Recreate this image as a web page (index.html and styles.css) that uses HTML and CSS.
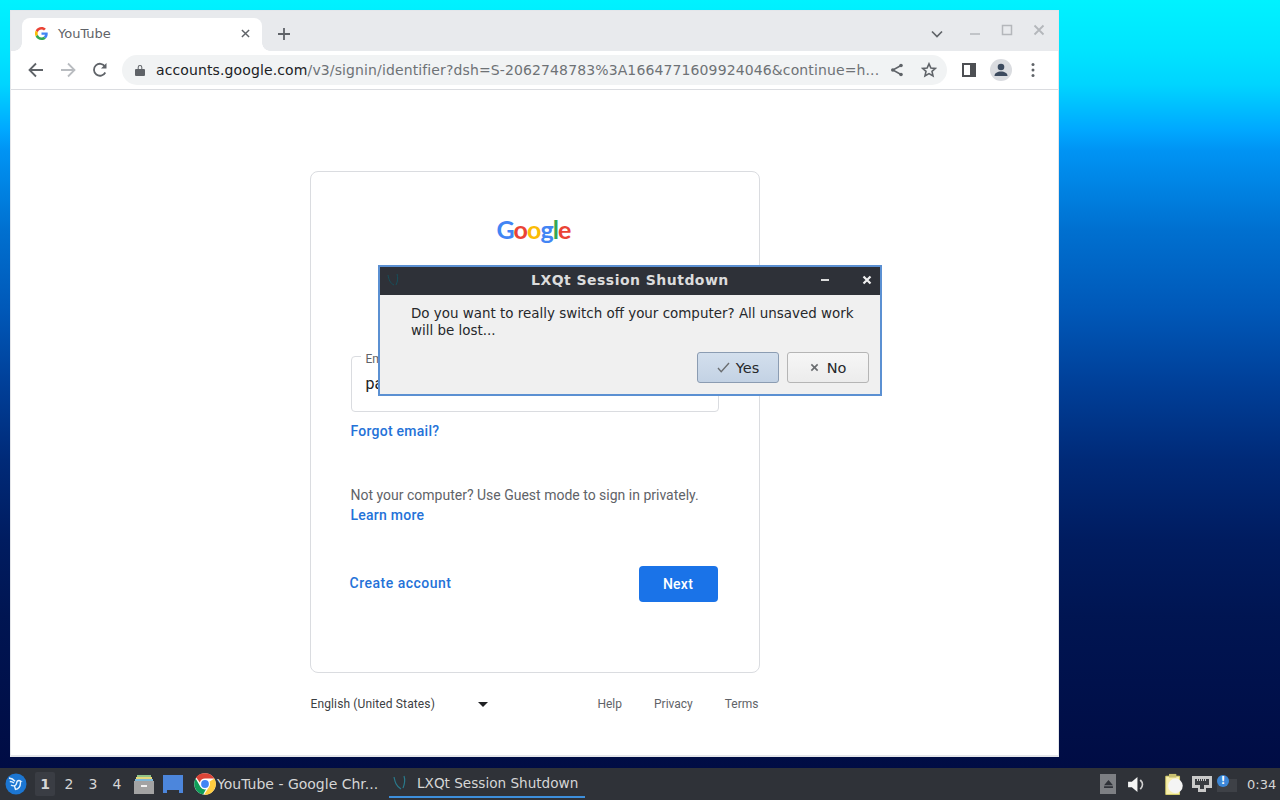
FILE: index.html
```html
<!DOCTYPE html>
<html lang="en">
<head>
<meta charset="utf-8">
<title>LXQt desktop</title>
<link rel="stylesheet" href="styles.css">
</head>
<body>
<div class="desktop">
  <section class="browser">
    <header class="tabstrip">
      <div class="tab">
        <svg class="tab-favicon" viewBox="0 0 48 48"><path fill="#EA4335" d="M24 9.5c3.5 0 6.700 1.200 9.200 3.600l6.900-6.900C35.900 2.400 30.500 0 24 0 14.600 0 6.500 5.400 2.600 13.200l8 6.200C12.400 13.700 17.700 9.500 24 9.500z"/><path fill="#4285F4" d="M47 24.500c0-1.600-.1-3.100-.4-4.500H24v9h12.900c-.6 3-2.200 5.400-4.700 7.100l7.700 6C44.400 37.900 47 31.800 47 24.500z"/><path fill="#FBBC05" d="M10.500 28.600A14.500 14.500 0 0 1 10.500 19.400l-8-6.200A24 24 0 0 0 2.600 34.800z"/><path fill="#34A853" d="M24 48c6.500 0 11.900-2.100 15.900-5.900l-7.700-6c-2.200 1.400-4.900 2.300-8.200 2.300-6.300 0-11.600-4.200-13.500-9.900l-8 6.200C6.500 42.600 14.600 48 24 48z"/></svg>
        <span class="tab-title">YouTube</span>
        <svg class="tab-close" viewBox="0 0 10 10"><path d="M1 1l8 8M9 1l-8 8"/></svg>
      </div>
      <svg class="new-tab" viewBox="0 0 12 12"><path d="M6 0v12M0 6h12"/></svg>
      <svg class="tab-search" viewBox="0 0 12 8"><path d="M1 1.500l5 5 5-5"/></svg>
      <svg class="win-min" viewBox="0 0 12 12"><path d="M1 9h10"/></svg>
      <svg class="win-max" viewBox="0 0 12 12"><path d="M1.500 1.500h9v9h-9z"/></svg>
      <svg class="win-close" viewBox="0 0 12 12"><path d="M1.500 1.500l9 9M10.500 1.500l-9 9"/></svg>
    </header>
    <nav class="toolbar">
      <span class="tool"><svg class="ico-stroke" viewBox="0 0 16 16"><path d="M15 8H2M8 1.500L1.500 8 8 14.500"/></svg></span>
      <span class="tool"><svg class="ico-stroke faded" viewBox="0 0 16 16"><path d="M1 8h13M8 1.500L14.500 8 8 14.500"/></svg></span>
      <span class="tool"><svg class="ico-stroke" viewBox="0 0 16 16"><path d="M13.300 10.500A6 6 0 1 1 13 4.500"/><path class="ico-fill" d="M14.500 1v5.500H9z"/></svg></span>
      <div class="omnibox">
        <svg class="lock" viewBox="0 0 10 12"><path d="M1 5h8a1 1 0 0 1 1 1v5a1 1 0 0 1-1 1H1a1 1 0 0 1-1-1V6a1 1 0 0 1 1-1zM2.700 5V3.200a2.300 2.300 0 0 1 4.600 0V5H6.300V3.200a1.300 1.300 0 0 0-2.600 0V5z"/></svg>
        <span class="url"><span class="url-host">accounts.google.com</span>/v3/signin/identifier?dsh=S-2062748783%3A1664771609924046&amp;continue=h...</span>
        <svg class="share" viewBox="0 0 14 14"><circle cx="11" cy="2.500" r="1.800"/><circle cx="2.800" cy="7" r="1.800"/><circle cx="11" cy="11.500" r="1.800"/><path d="M11 2.500L2.800 7l8.200 4.500"/></svg>
        <svg class="star" viewBox="0 0 16 16"><path d="M8 1.800l1.900 4.200 4.500.4-3.400 3 1 4.500L8 11.600l-4 2.300 1-4.500-3.400-3 4.500-.4z"/></svg>
      </div>
      <span class="tool panel-tool"><svg class="sidepanel" viewBox="0 0 14 14"><path fill-rule="evenodd" d="M0 0h14v14H0zM2 2v10h6V2z"/></svg></span>
      <span class="avatar"><svg viewBox="0 0 22 22"><circle cx="11" cy="8" r="3.300"/><path d="M4.500 17c0-3 3-4.500 6.500-4.500s6.500 1.500 6.500 4.500z"/></svg></span>
      <span class="tool"><svg class="kebab" viewBox="0 0 4 16"><circle cx="2" cy="2.500" r="1.500"/><circle cx="2" cy="8" r="1.500"/><circle cx="2" cy="13.500" r="1.500"/></svg></span>
    </nav>
    <main class="page">
      <div class="card">
        <div class="logo"><span class="g-blue">G</span><span class="g-red">o</span><span class="g-yellow">o</span><span class="g-blue">g</span><span class="g-green">l</span><span class="g-red">e</span></div>
        <div class="field">
          <span class="field-label">Email or phone</span>
          <span class="field-value">pa</span>
        </div>
        <a class="link forgot">Forgot email?</a>
        <p class="guest">Not your computer? Use Guest mode to sign in privately.<br><a class="link">Learn more</a></p>
        <div class="actions">
          <a class="create">Create account</a>
          <button class="next">Next</button>
        </div>
      </div>
      <footer class="foot">
        <span class="lang">English (United States)</span>
        <span class="lang-caret"></span>
        <span class="foot-links"><span>Help</span><span>Privacy</span><span>Terms</span></span>
      </footer>
    </main>
  </section>

  <section class="dialog">
    <header class="dlg-title">
      <svg class="dlg-icon" viewBox="0 0 16 16"><path d="M3 3c1 5 2 8 6 10M12 2c1 3 1 7-1 11"/></svg>
      <span class="dlg-caption">LXQt Session Shutdown</span>
      <svg class="dlg-min" viewBox="0 0 10 10"><path d="M1 5h8"/></svg>
      <svg class="dlg-close" viewBox="0 0 10 10"><path d="M1.500 1.500l7 7M8.500 1.500l-7 7"/></svg>
    </header>
    <div class="dlg-body">
      <p class="dlg-text">Do you want to really switch off your computer? All unsaved work will be lost...</p>
      <div class="dlg-buttons">
        <button class="dlg-btn dlg-yes"><svg viewBox="0 0 14 12"><path d="M1 6.500l3.500 4L13 1"/></svg>Yes</button>
        <button class="dlg-btn dlg-no"><svg viewBox="0 0 10 10"><path d="M1.500 1.500l7 7M8.500 1.500l-7 7"/></svg>No</button>
      </div>
    </div>
  </section>
</div>

<footer class="taskbar">
  <svg class="start" viewBox="0 0 22 22"><circle cx="11" cy="11" r="10.500" fill="#1c76d2"/><path fill="none" stroke="#e8f4ff" stroke-width="1.400" stroke-linejoin="round" d="M4 5c2.500.3 4.500 1.500 6 3.300M4.800 8.500c1.500 0 3 .5 4.200 1.500M6 12c1 .8 2.300 1 3.500.8M10 16.500c3.500-.5 5.500-3.500 5.500-7 .3-1.200-.5-2-1.500-2-1.300 0-2.200 1-2.300 2.300-.2 1.500-1 2.500-2.200 3.200l1 3.500"/><path fill="#e8f4ff" d="M15.300 7.500l2.500.8-2.200.8z"/></svg>
  <div class="desks">
    <span class="desk desk-on">1</span><span class="desk">2</span><span class="desk">3</span><span class="desk">4</span>
  </div>
  <svg class="launch-files" viewBox="0 0 20 20"><path fill="#8fc48a" d="M3 1h14v3H3z"/><path fill="#e6d97c" d="M2 3h16v3H2z"/><path fill="#7fb8d8" d="M1 5h18v3H1z"/><path fill="#a3a3a3" d="M0 7h20v13H0z"/><path fill="#f2f2f2" d="M7 11h6v2H7z"/></svg>
  <svg class="launch-desktop" viewBox="0 0 20 18"><path fill="#4c86dc" d="M0 0h20v18h-4v-3H4v3H0z"/></svg>
  <div class="task task-chrome">
    <svg class="chrome" viewBox="0 0 48 48"><circle cx="24" cy="24" r="23.500" fill="#fff"/><path fill="#db4437" d="M24 .5a23.500 23.500 0 0 1 20.400 11.750H24a11.750 11.750 0 0 0-11.300 8.600L4.600 9A23.500 23.500 0 0 1 24 .5z"/><path fill="#0f9d58" d="M3.600 12.250L13.800 30A11.750 11.750 0 0 0 26 35.500L20 47A23.500 23.500 0 0 1 3.600 12.250z"/><path fill="#ffcd40" d="M44.400 12.250A23.500 23.500 0 0 1 22 47.400L33 30a11.750 11.750 0 0 0 .5-11z"/><circle cx="24" cy="24" r="10.500" fill="#fff"/><circle cx="24" cy="24" r="8.500" fill="#4285f4"/></svg>
    <span class="task-label">YouTube - Google Chr...</span>
  </div>
  <div class="task task-active">
    <svg class="task-lxqt" viewBox="0 0 16 16"><path d="M2 2c1 5 2 9 7 12M12 1c1 3 1 7-1 12"/></svg>
    <span class="task-label">LXQt Session Shutdown</span>
  </div>
  <div class="tray">
    <span class="eject"><svg viewBox="0 0 10 9"><path d="M5 0l5 6H0zM0 7h10v2H0z"/></svg></span>
    <svg class="volume" viewBox="0 0 18 16"><path fill="#f4f4f4" d="M0 5h4l6-5v16l-6-5H0z"/><path fill="none" stroke="#cfcfcf" stroke-width="2" d="M13 3c3 3 3 7 0 10"/></svg>
    <svg class="clipboard" viewBox="0 0 20 24"><path fill="#f7efb0" stroke="#dcd46a" d="M.5 3.500h15v20H.5z"/><path fill="#c8c070" d="M4 1h8v4H4z"/><circle cx="11" cy="14" r="8" fill="#f4f4f4"/></svg>
    <svg class="network" viewBox="0 0 20 16"><path fill="#c9c9c9" d="M0 0h20v12h-6v4H6v-4H0z"/><path fill="#3a3d42" d="M3 3h14v6h-5v4H8V9H3z"/><path fill="#c9c9c9" d="M5 3h1v2H5zm2 0h1v2H7zm2 0h1v2H9zm2 0h1v2h-1zm2 0h1v2h-1z"/></svg>
    <span class="notify"><span class="notify-dot">!</span></span>
    <span class="clock">0:34</span>
  </div>
</footer>
</body>
</html>
```

FILE: styles.css
```css
* { box-sizing: border-box; }
html, body { margin: 0; height: 100%; }
body {
  width: 1280px;
  height: 800px;
  overflow: hidden;
  display: flex;
  flex-direction: column;
  font-family: "DejaVu Sans", sans-serif;
  background: #2f3238;
}

/* desktop */
.desktop {
  position: relative;
  height: 768px;
  background: linear-gradient(180deg, #00f2ff 0, #00e4ff 50px, #00d4ff 85px, #00a8ff 130px, #0094f4 150px, #0070d0 230px, #0058b8 310px, #003f98 385px, #002a78 460px, #001c60 540px, #001552 616px, #000c44 768px);
}

/* browser window */
.browser {
  position: absolute;
  left: 10px;
  top: 10px;
  width: 1049px;
  height: 747px;
  display: flex;
  flex-direction: column;
  border: 1px solid #e4e6ea;
  border-bottom-width: 2px;
  background: #fff;
}
.tabstrip {
  height: 40px;
  flex: none;
  background: #e8eaed;
  display: flex;
  align-items: flex-end;
  padding-left: 11px;
  position: relative;
}
.tab {
  position: relative;
  width: 240px;
  height: 33px;
  background: #fff;
  border-radius: 8px 8px 0 0;
  display: flex;
  align-items: center;
  padding: 0 12px 2px 13px;
  color: #5f6368;
  font-size: 13px;
}
.tab::before, .tab::after {
  content: "";
  position: absolute;
  bottom: 0;
  width: 8px;
  height: 8px;
}
.tab::before { left: -8px; background: radial-gradient(circle at 0 0, transparent 7.500px, #fff 8px); }
.tab::after { right: -8px; background: radial-gradient(circle at 100% 0, transparent 7.500px, #fff 8px); }
.tab-favicon { width: 13px; height: 13px; margin-right: 10px; }
.tab-title { flex: 1; }
.tab-close { width: 9px; height: 9px; fill: none; stroke: #5f6368; stroke-width: 1.600; }
.new-tab { width: 12px; height: 12px; fill: none; stroke: #5f6368; stroke-width: 1.800; margin: 0 0 11px 16px; }
.tab-search { width: 12px; height: 8px; fill: none; stroke: #5f6368; stroke-width: 1.700; margin: 0 0 13px 641px; }
.win-min, .win-max, .win-close { width: 12px; height: 12px; fill: none; stroke: #b4b7bb; stroke-width: 1.500; margin-bottom: 14px; }
.win-min { margin-left: 26px; }
.win-max { margin-left: 20px; margin-bottom: 15px; }
.win-close { margin-left: 20px; margin-bottom: 15px; stroke-width: 1.800; }

.toolbar {
  height: 39px;
  flex: none;
  display: flex;
  align-items: center;
  padding-left: 9px;
  border-bottom: 1px solid #dadce0;
  background: #fff;
}
.tool { width: 32px; height: 32px; display: flex; align-items: center; justify-content: center; flex: none; }
.ico-stroke { width: 16px; height: 16px; fill: none; stroke: #5f6368; stroke-width: 1.800; }
.ico-stroke.faded { stroke: #b9bcc0; }
.ico-fill { fill: #5f6368; stroke: none; }
.omnibox {
  width: 825px;
  height: 30px;
  margin-left: 6px;
  border-radius: 15px;
  background: #f1f3f4;
  display: flex;
  align-items: center;
  padding-left: 13px;
  font-size: 14px;
  flex: none;
}
.lock { width: 10px; height: 12px; fill: #5f6368; flex: none; }
.url { margin-left: 11px; width: 723px; color: #6e7276; white-space: nowrap; overflow: hidden; flex: none; letter-spacing: .12px; }
.url-host { color: #202124; }
.share { width: 14px; height: 14px; fill: #5f6368; stroke: #5f6368; stroke-width: 1.500; margin-left: 11px; flex: none; }
.share circle { stroke: none; }
.share path { fill: none; }
.star { width: 16px; height: 16px; fill: none; stroke: #5f6368; stroke-width: 1.600; margin-left: 17px; flex: none; }
.panel-tool { margin-left: 6px; margin-right: -1px; }
.sidepanel { width: 14px; height: 14px; fill: #4d4f53; }
.avatar { width: 22px; height: 22px; border-radius: 50%; background: #dadce0; margin-left: 6px; margin-right: 5px; flex: none; }
.avatar svg { display: block; fill: #3c4a5e; }
.kebab { width: 4px; height: 16px; fill: #5f6368; }

/* sign in page */
.page { flex: 1; background: #fff; font-family: Roboto, sans-serif; }
.card {
  width: 450px;
  height: 502px;
  margin: 81px auto 0;
  border: 1px solid #dadce0;
  border-radius: 8px;
  padding: 40px 40px 0 40px;
}
.logo { font-family: Lato, sans-serif; font-weight: 700; font-size: 25px; line-height: 34px; letter-spacing: -.9px; text-align: center; height: 34px; margin-left: -2px; }
.g-blue { color: #4285f4; }
.g-red { color: #ea4335; }
.g-yellow { color: #fbbc05; }
.g-green { color: #34a853; }
.field {
  position: relative;
  width: 368px;
  height: 56px;
  margin-top: 110px;
  border: 1px solid #dadce0;
  border-radius: 4px;
  display: flex;
  align-items: center;
  padding: 0 0 2px 14px;
}
.field-label { position: absolute; left: 9px; top: -5px; padding: 0 5px; background: #fff; color: #5f6368; font-size: 12px; line-height: 14px; }
.field-value { font-size: 16px; color: #202124; }
.link { color: #2472d8; font-weight: 500; font-size: 14px; letter-spacing: .25px; }
.forgot { display: block; margin-top: 9px; line-height: 20px; }
.guest { margin: 44px 0 0; font-size: 14px; line-height: 20px; color: #5f6368; }
.actions { display: flex; justify-content: space-between; align-items: center; margin-top: 41px; width: 367px; }
.create { color: #2472d8; font-family: Roboto, sans-serif; font-weight: 500; font-size: 14px; letter-spacing: .5px; margin: -2px 0 0 -1px; }
.next {
  width: 79px;
  height: 36px;
  border: 0;
  border-radius: 4px;
  background: #1a73e8;
  color: #fff;
  font-family: Roboto, sans-serif;
  font-weight: 500;
  font-size: 14px;
  letter-spacing: .25px;
}
.foot {
  width: 450px;
  margin: 20px auto 0;
  display: flex;
  align-items: center;
  height: 22px;
  font-size: 12px;
  color: #5f6368;
  padding-left: 1px;
}
.lang { color: #3c4043; width: 167px; letter-spacing: .13px; }
.lang-caret { width: 0; height: 0; border: 5px solid transparent; border-top: 5px solid #202124; border-bottom: 0; }
.foot-links { margin-left: auto; display: flex; gap: 32px; padding-right: 1px; }

/* shutdown dialog */
.dialog {
  position: absolute;
  left: 378px;
  top: 265px;
  width: 504px;
  height: 131px;
  border: 2px solid #5b90d2;
  display: flex;
  flex-direction: column;
  background: #f0f0f0;
}
.dlg-title {
  height: 28px;
  flex: none;
  background: #2e3138;
  position: relative;
  display: flex;
  align-items: center;
  padding: 0 8px 2px 5px;
}
.dlg-icon { width: 16px; height: 16px; fill: none; stroke: #16505c; stroke-width: 1; }
.dlg-caption { position: absolute; left: 151px; color: #dcdcdc; font-weight: 700; font-size: 14px; letter-spacing: .47px; }
.dlg-min, .dlg-close { width: 10px; height: 10px; fill: none; stroke: #f0f0f0; stroke-width: 1.800; }
.dlg-min { margin-left: auto; margin-right: 32px; }
.dlg-close { stroke-width: 2.200; }
.dlg-body { flex: 1; padding: 10px 10px 0 31px; }
.dlg-text { margin: 0; font-size: 13.450px; line-height: 17px; color: #26282b; }
.dlg-buttons { display: flex; justify-content: flex-end; gap: 8px; margin-top: 13px; padding-right: 1px; }
.dlg-btn {
  width: 82px;
  height: 31px;
  border-radius: 3px;
  border: 1px solid #b5b5b5;
  background: linear-gradient(#f6f6f6, #ececec);
  font-family: "DejaVu Sans", sans-serif;
  font-size: 14.500px;
  color: #26282b;
  display: flex;
  align-items: center;
  justify-content: center;
  padding: 0;
}
.dlg-btn svg { fill: none; stroke: #6a6d70; margin-right: 6px; }
.dlg-yes { border-color: #8b9cb2; background: linear-gradient(#d3dfed, #c3d2e4); }
.dlg-yes svg { width: 13px; height: 11px; stroke-width: 1.500; }
.dlg-no svg { width: 9px; height: 9px; stroke-width: 1.800; margin-right: 8px; }

/* panel */
.taskbar {
  height: 32px;
  flex: none;
  background: #2f3238;
  display: flex;
  align-items: center;
  color: #d6d6d6;
  font-size: 14px;
}
.start { width: 22px; height: 22px; margin-left: 5px; flex: none; }
.desks { display: flex; margin-left: 7px; }
.desk { width: 24px; height: 24px; line-height: 24px; text-align: center; }
.desk-on { background: #3a3d44; font-weight: 700; width: 20px; margin-right: 2px; margin-left: 1px; border-radius: 2px; }
.launch-files { width: 20px; height: 20px; margin-left: 5px; flex: none; }
.launch-desktop { width: 20px; height: 18px; margin-left: 9px; flex: none; }
.task { display: flex; align-items: center; height: 32px; flex: none; }
.chrome { width: 22px; height: 22px; flex: none; margin-right: 1px; }
.task-chrome { margin-left: 11px; width: 195px; }
.task-active { width: 196px; height: 30px; align-self: flex-start; border-bottom: 2px solid #3d8fdc; padding: 2px 0 0 3px; font-size: 13.600px; }
.task-lxqt { width: 16px; height: 16px; fill: none; stroke: #2a7a8c; stroke-width: 1.200; flex: none; margin-right: 9px; }
.tray { margin-left: auto; display: flex; align-items: center; }
.eject { width: 16px; height: 20px; background: #7d7f83; display: flex; align-items: center; justify-content: center; }
.eject svg { width: 9px; height: 8px; fill: #2f3238; }
.volume { width: 17px; height: 15px; margin-left: 12px; }
.clipboard { width: 19px; height: 22px; margin-left: 20px; }
.network { width: 20px; height: 16px; margin-left: 8px; }
.notify { position: relative; width: 20px; height: 13px; margin-left: 5px; margin-top: 2px; background: #3e4147; }
.notify-dot {
  position: absolute;
  left: 0;
  top: -4px;
  width: 12px;
  height: 12px;
  border-radius: 50%;
  background: #3b87d8;
  color: #fff;
  font-size: 10px;
  font-weight: 700;
  line-height: 12px;
  text-align: center;
}
.clock { margin-left: 10px; margin-right: 5px; font-size: 13px; width: 28px; white-space: nowrap; }
```
